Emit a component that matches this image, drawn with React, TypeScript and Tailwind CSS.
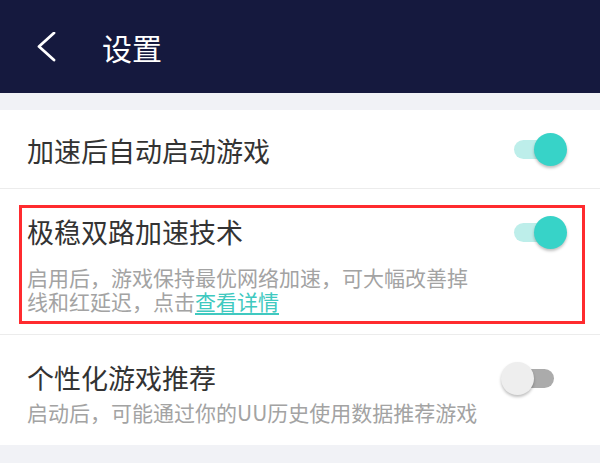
import React from "react";

function Toggle({ on }: { on: boolean }) {
  return (
    <div className="relative w-[66px] h-[33px] shrink-0">
      <div
        className={
          on
            ? "absolute left-[13px] top-[7px] w-[40px] h-[19px] rounded-full bg-[#bdeeea]"
            : "absolute left-[13px] top-[7px] w-[40px] h-[19px] rounded-full bg-[#ababab]"
        }
      />
      <div
        className={
          on
            ? "absolute left-[33px] top-0 w-[33px] h-[33px] rounded-full bg-[#37d3c8] shadow-[0_2px_3px_rgba(0,0,0,0.25)]"
            : "absolute left-0 top-0 w-[33px] h-[33px] rounded-full bg-[#eeeeee] shadow-[0_2px_3px_rgba(0,0,0,0.25)]"
        }
      />
    </div>
  );
}

export default function App() {
  return (
    <div className="w-[600px] h-[463px] bg-[#f1f2f6] font-['Noto_Sans_CJK_SC','Noto_Sans',sans-serif] overflow-hidden">
      <div className="h-[93px] bg-[#15193e] flex items-center">
        <svg width="20" height="30" viewBox="0 0 20 30" className="ml-[37px]">
          <polyline points="17,1 2,14.5 17,28" fill="none" stroke="#ffffff" strokeWidth="2.8" strokeLinecap="round" strokeLinejoin="round" />
        </svg>
        <span className="ml-[45px] text-white text-[30px] leading-none">设置</span>
      </div>
      <div className="h-[17px]" />
      <div className="bg-white">
        <div className="h-[79px] pl-[27px] pr-[33px] flex items-center justify-between border-b border-[#ececec]">
          <span className="text-[27px] leading-[34px] text-[#333333] pt-[4px]">加速后自动启动游戏</span>
          <Toggle on={true} />
        </div>
        <div className="pt-[16px] pl-[19px] pr-[15px] pb-[10px] border-b border-[#ececec]">
          <div className="border-[3px] border-[#ff2b2f] pl-[5px] pr-[15px] pt-[7px] pb-[8px]">
            <div className="flex items-center justify-between h-[34px]">
              <span className="text-[27px] leading-[34px] text-[#333333]">极稳双路加速技术</span>
              <Toggle on={true} />
            </div>
            <div className="mt-[16px] text-[21px] leading-[24px] text-[#a3a3a3]">
              启用后，游戏保持最优网络加速，可大幅改善掉
              <br />
              线和红延迟，点击
              <span className="text-[#3fc9c0] underline underline-offset-[3px]">查看详情</span>
            </div>
          </div>
        </div>
        <div className="pt-[26px] pl-[27px] pr-[33px] pb-[21px]">
          <div className="flex items-center justify-between h-[34px]">
            <span className="text-[27px] leading-[34px] text-[#333333]">个性化游戏推荐</span>
            <Toggle on={false} />
          </div>
          <div className="mt-[5px] text-[21px] leading-[24px] text-[#a3a3a3]">
            启动后，可能通过你的UU历史使用数据推荐游戏
          </div>
        </div>
      </div>
    </div>
  );
}
